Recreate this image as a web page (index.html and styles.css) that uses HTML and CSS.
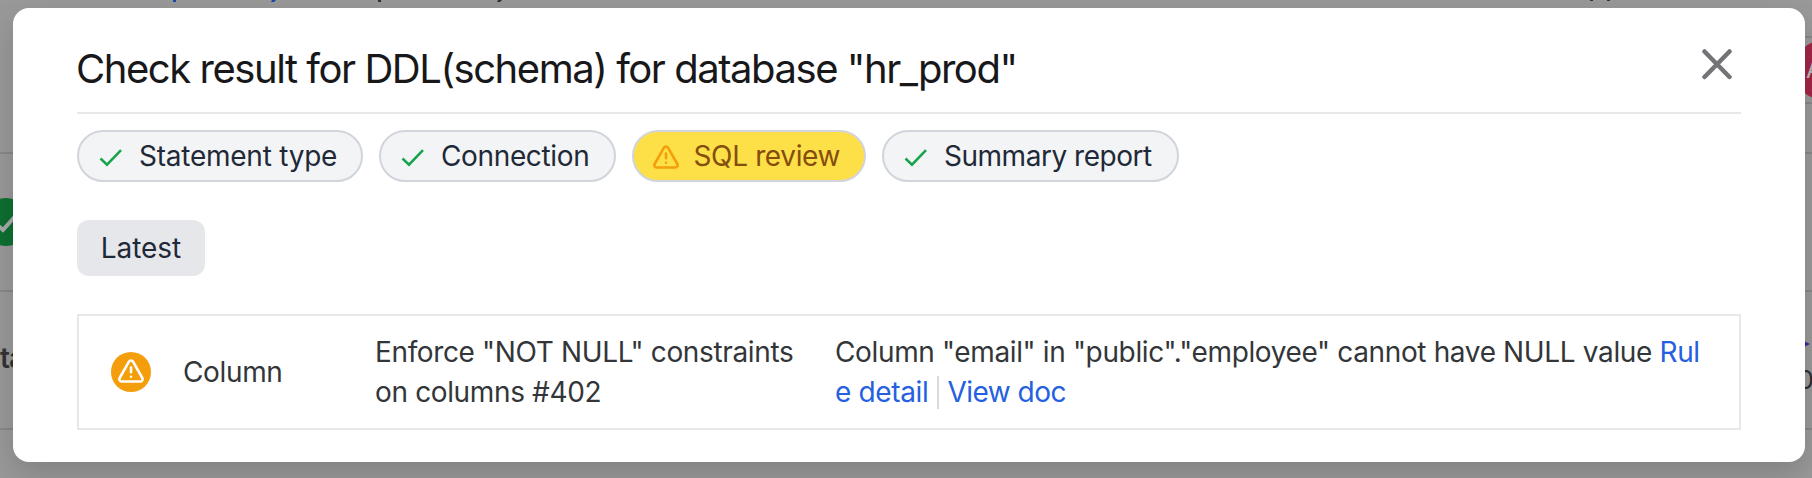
FILE: index.html
```html
<!DOCTYPE html>
<html lang="en">
<head>
<meta charset="utf-8">
<title>Check result</title>
<link rel="stylesheet" href="styles.css">
</head>
<body>
<svg class="backdrop" viewBox="0 0 1812 478" width="1812" height="478" aria-hidden="true">
  <path class="rule" d="M0 153H1812M0 291H1812M0 429H1812M1790 37H1812M1790 103H1812"/>
  <g class="blue"><rect x="173" y="0" width="3" height="2"/><path d="M272 0h4l-2 2h-3z"/></g>
  <g class="dark"><rect x="378" y="0" width="3" height="2"/><path d="M498 0h4l-2 2h-3z"/><rect x="1590" y="0" width="3" height="1"/><rect x="1607" y="0" width="3" height="1"/></g>
  <circle class="ok" cx="6" cy="222" r="24"/>
  <path class="ok-tick" d="M-5 223L3 230L18 213"/>
  <circle class="avatar" cx="1824" cy="70" r="30"/>
  <text class="avatar-text" x="1806" y="78">A</text>
  <text class="stage" x="0" y="368">ta</text>
  <path class="arrow" d="M1800 339l10 5l-10 5z"/>
  <text class="num" x="1798" y="389">0</text>
</svg>
<main class="modal">
  <header class="head">
    <h1 class="title">Check result for DDL(schema) for database "hr_prod"</h1>
    <button class="close" aria-label="Close"><svg width="32" height="32" viewBox="0 0 32 32"><path d="M3.500 3.500L28.500 29M28.500 3.500L3.500 29"/></svg></button>
  </header>
  <nav class="pills">
    <button class="pill p1"><svg class="check" width="28" height="28" viewBox="0 0 28 28"><path d="M1.500 16.500L8 22.700L22 8.200"/></svg><span>Statement type</span></button>
    <button class="pill p2"><svg class="check" width="28" height="28" viewBox="0 0 28 28"><path d="M1.500 16.500L8 22.700L22 8.200"/></svg><span>Connection</span></button>
    <button class="pill p3 warn"><svg class="tri" width="28" height="28" viewBox="0 0 24 24"><path d="M21.730 18l-8-14a2 2 0 0 0-3.480 0l-8 14A2 2 0 0 0 4 21h16a2 2 0 0 0 1.730-3zM12 9v4M12 17h.010"/></svg><span>SQL review</span></button>
    <button class="pill p4"><svg class="check" width="28" height="28" viewBox="0 0 28 28"><path d="M1.500 16.500L8 22.700L22 8.200"/></svg><span>Summary report</span></button>
  </nav>
  <button class="tab">Latest</button>
  <section class="result">
    <span class="badge"><svg class="tri" width="28" height="28" viewBox="0 0 24 24"><path d="M21.730 18l-8-14a2 2 0 0 0-3.480 0l-8 14A2 2 0 0 0 4 21h16a2 2 0 0 0 1.730-3zM12 9v4M12 17h.010"/></svg></span>
    <span class="kind">Column</span>
    <p class="rulename">Enforce "NOT NULL" constraints<br>on columns #402</p>
    <p class="detail">Column "email" in "public"."employee" cannot have NULL value <a class="link">Rul<br>e detail</a><a class="link doc">View doc</a></p>
  </section>
</main>
</body>
</html>
```

FILE: styles.css
```css
* { box-sizing: border-box; }
body {
  margin: 0;
  width: 1812px;
  height: 478px;
  overflow: hidden;
  background: #999;
  font-family: Inter, "Liberation Sans", sans-serif;
  font-size: 28px;
  font-weight: 420;
  line-height: 40px;
  letter-spacing: -0.36px;
  color: #333639;
  padding: 8px 7px 16px 13px;
}
button { font: inherit; border: 0; background: none; padding: 0; color: #1f2937; letter-spacing: -0.36px; }
.backdrop { position: absolute; left: 0; top: 0; z-index: -1; }
.rule { stroke: #888; stroke-width: 2; }
.blue { fill: #174aa0; }
.dark { fill: #333; }
.ok { fill: #0d6f31; }
.ok-tick { fill: none; stroke: #aaa; stroke-width: 4; }
.avatar { fill: #a32645; }
.avatar-text { fill: #bbb; font-size: 24px; }
.stage { fill: #333; font-size: 28px; font-weight: 600; letter-spacing: -1px; }
.arrow { fill: #3828a0; }
.num { fill: #2a2d33; font-size: 25px; }
.modal {
  width: 1792px;
  height: 454px;
  padding: 0 64px;
  border-radius: 16px;
  background: #fff;
  box-shadow: 0 12px 30px rgba(0, 0, 0, .16);
}
.head {
  display: flex;
  justify-content: space-between;
  height: 106px;
  border-bottom: 2px solid #e8e8e8;
}
.title {
  margin: 36px 0 0 -1px;
  font-size: 40px;
  line-height: 50px;
  font-weight: 430;
  letter-spacing: -1.460px;
  color: #18181b;
  white-space: nowrap;
}
.close { width: 32px; height: 32px; margin: 40px 8px 0 0; }
.close svg { display: block; fill: none; stroke: #737378; stroke-width: 4.500; stroke-linecap: round; }
.pills { display: flex; gap: 16px; margin-top: 16px; }
.pill {
  display: flex;
  align-items: center;
  height: 52px;
  padding-left: 20px;
  border: 2px solid #d1d5db;
  border-radius: 26px;
  background: #f3f4f6;
  white-space: nowrap;
}
.pill svg { flex: none; margin-right: 12px; }
.p1 { width: 286px; letter-spacing: -0.24px; }
.p2 { width: 237px; }
.p3 { width: 234px; }
.p4 { width: 297px; letter-spacing: -0.48px; }
.check { fill: none; stroke: #16a34a; stroke-width: 2.500; }
.tri { fill: none; stroke: #f59e0b; stroke-width: 2.200; stroke-linecap: round; stroke-linejoin: round; }
.warn { padding-left: 18px; background: #fde047; color: #854d0e; }
.pill .tri { margin: 2px 13.500px 0 0; }
.tab { display: block; margin-top: 38px; width: 128px; height: 56px; border-radius: 12px; background: #e5e7eb; letter-spacing: -0.05px; }
.result {
  display: grid;
  grid-template-columns: 72px 192px 460px 1fr;
  align-items: center;
  height: 116px;
  margin-top: 38px;
  padding-left: 32px;
  border: 2px solid #e8e8e8;
  white-space: nowrap;
}
.result p { margin: 0; }
.badge { display: flex; align-items: center; justify-content: center; width: 40px; height: 40px; padding-bottom: 2px; border-radius: 50%; background: #f59e0b; }
.badge .tri { stroke: #fff; }
.link { color: #2560e0; }
.doc { display: inline-block; height: 33px; line-height: 33px; margin-left: 9px; padding-left: 8px; border-left: 2px solid #d8dade; letter-spacing: -0.5px; }
```
